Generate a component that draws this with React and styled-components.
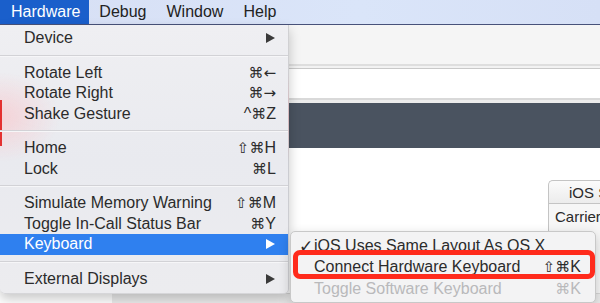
import React from "react";
import styled, { createGlobalStyle } from "styled-components";

const Global = createGlobalStyle`
  html, body { margin: 0; padding: 0; }
  body {
    width: 600px;
    height: 303px;
    overflow: hidden;
    font-family: "Liberation Sans", "DejaVu Sans", Arial, sans-serif;
    -webkit-font-smoothing: antialiased;
  }
  #root { width: 600px; height: 303px; }
`;

const Screen = styled.div`
  position: relative;
  width: 600px;
  height: 303px;
  overflow: hidden;
  background: #fff;
  display: flex;
  flex-direction: column;
`;

const MenuBar = styled.div`
  height: 24px;
  flex: none;
  display: flex;
  align-items: stretch;
  border-bottom: 1px solid #48527a;
  background: linear-gradient(90deg, #d7dff4 0%, #dae5f9 60%, #d6e0f6 100%);
`;

const BarItem = styled.div`
  display: flex;
  align-items: center;
  padding: ${(p) => (p.$first ? "0 9px 0 11px" : "0 10px")};
  font-size: 16px;
  color: ${(p) => (p.$active ? "#fff" : "#222")};
  background: ${(p) => (p.$active ? "#1a5fcb" : "transparent")};
`;

const Toolbar = styled.div`
  height: 39px;
  flex: none;
  background: #f5f5f5;
  border-bottom: 2px solid #dedede;
`;

const ThinStrip = styled.div`
  height: 2px;
  flex: none;
  background: #f2f2f2;
  border-bottom: 1px solid #c9c9c9;
`;

const WhiteBand = styled.div`
  height: 29px;
  flex: none;
  background: #fff;
  border-bottom: 2px solid #d9d9d9;
`;

const GreyBand = styled.div`
  height: 3px;
  flex: none;
  background: #ececec;
`;

const DarkBar = styled.div`
  height: 45px;
  flex: none;
  background: #4a5360;
`;

const Content = styled.div`
  flex: 1;
  display: flex;
  flex-direction: column;
  background: #fff;
`;

const ContentUpper = styled.div`
  flex: 1;
  display: flex;
  justify-content: flex-end;
  padding-top: 32px;
`;

const SideColumn = styled.div`
  width: 52px;
  display: flex;
  flex-direction: column;
  overflow: hidden;
  white-space: nowrap;
`;

const Tab = styled.div`
  height: 22px;
  flex: none;
  border: 1px solid #c4c4c4;
  border-right: none;
  border-radius: 5px 0 0 0;
  background: linear-gradient(#fbfbfb, #ececec);
  font-size: 15px;
  color: #2a2a2a;
  padding-left: 20px;
  display: flex;
  align-items: center;
  overflow: hidden;
`;

const Panel = styled.div`
  flex: 1;
  border-left: 1px solid #c4c4c4;
  background: #f6f6f6;
  font-size: 15px;
  color: #2a2a2a;
  padding: 4px 0 0 6px;
  overflow: hidden;
`;

const BottomBar = styled.div`
  height: 9px;
  flex: none;
  margin-left: 112px;
  background: #ebebeb;
  border-top: 1px solid #d6d6d6;
`;

const Dropdown = styled.div`
  position: absolute;
  left: 0;
  top: 25px;
  width: 289px;
  box-sizing: border-box;
  padding: 3px 0 4px;
  border-right: 1px solid rgba(0, 0, 0, 0.12);
  border-bottom: 1px solid rgba(0, 0, 0, 0.1);
  border-radius: 0 0 5px 5px;
  box-shadow: 0 5px 12px rgba(0, 0, 0, 0.22);
  background:
    linear-gradient(90deg, rgba(226, 30, 30, 0.9) 0 2px, transparent 2px) 0 75px / 100% 46px no-repeat,
    radial-gradient(ellipse 60px 45px at 0 92px, rgba(255, 185, 190, 0.5), rgba(255, 185, 190, 0) 100%),
    linear-gradient(180deg, #efeff2 0%, #e9eaef 50%, #ececef 100%);
`;

const Submenu = styled.div`
  position: absolute;
  left: 290px;
  top: 231px;
  width: 306px;
  height: 72px;
  box-sizing: border-box;
  padding: 3px 0;
  border: 1px solid #c8c8c8;
  border-radius: 5px;
  box-shadow: 0 4px 12px rgba(0, 0, 0, 0.2);
  background: #f3f3f4;
`;

const Item = styled.div`
  height: ${(p) => (p.$tall ? "21.5px" : "20.5px")};
  display: flex;
  align-items: center;
  justify-content: space-between;
  padding: ${(p) => (p.$sub ? "0 14px 0 8px" : "0 12px 0 24px")};
  font-size: 16px;
  white-space: nowrap;
  color: ${(p) => (p.$active ? "#fff" : p.$disabled ? "#b9b9bb" : "#2b2b2b")};
  background: ${(p) => (p.$active ? "#2f80ef" : "transparent")};
`;

const Label = styled.span`
  display: flex;
  align-items: center;
`;

const Check = styled.span`
  width: 15px;
  flex: none;
  font-family: "DejaVu Sans", sans-serif;
  font-size: 17px;
  font-weight: bold;
`;

const Shortcut = styled.span`
  display: flex;
  align-items: center;
`;

const Mod = styled.span`
  font-family: "DejaVu Sans", sans-serif;
  font-size: 15px;
`;

const Separator = styled.div`
  height: 14px;
  display: flex;
  flex-direction: column;
  justify-content: center;
  &::before {
    content: "";
    height: 1px;
    background: #d2d2d6;
  }
  &::after {
    content: "";
    height: 1px;
    background: #f6f6f8;
  }
`;

const Highlight = styled.div`
  position: absolute;
  left: 293px;
  top: 250px;
  width: 302px;
  height: 29px;
  box-sizing: border-box;
  border: 5px solid #ff2b1c;
  border-radius: 7px;
`;

const Arrow = () => (
  <svg width="9" height="10" viewBox="0 0 9 10">
    <path d="M0 0 L9 5 L0 10 Z" fill="currentColor" />
  </svg>
);

const ArrowWrap = styled.span`
  display: flex;
  padding-right: 1px;
  color: ${(p) => (p.$active ? "#fff" : "#3a3a3a")};
`;

const MODS = "⌘⇧←→";

const Keys = ({ value }) => (
  <Shortcut>
    {Array.from(value || "").map((c, i) =>
      MODS.includes(c) ? <Mod key={i}>{c}</Mod> : <span key={i}>{c}</span>
    )}
  </Shortcut>
);

const mainMenu = [
  { label: "Device", arrow: true },
  "sep",
  { label: "Rotate Left", key: "⌘←" },
  { label: "Rotate Right", key: "⌘→" },
  { label: "Shake Gesture", key: "^⌘Z" },
  "sep",
  { label: "Home", key: "⇧⌘H" },
  { label: "Lock", key: "⌘L" },
  "sep",
  { label: "Simulate Memory Warning", key: "⇧⌘M" },
  { label: "Toggle In-Call Status Bar", key: "⌘Y" },
  { label: "Keyboard", arrow: true, active: true },
  "sep",
  { label: "External Displays", arrow: true },
];

const subMenu = [
  { label: "iOS Uses Same Layout As OS X", checked: true },
  { label: "Connect Hardware Keyboard", key: "⇧⌘K" },
  { label: "Toggle Software Keyboard", key: "⌘K", disabled: true },
];

export default function App() {
  return (
    <Screen>
      <Global />
      <MenuBar>
        <BarItem $active $first>Hardware</BarItem>
        <BarItem>Debug</BarItem>
        <BarItem>Window</BarItem>
        <BarItem>Help</BarItem>
      </MenuBar>
      <Toolbar />
      <ThinStrip />
      <WhiteBand />
      <GreyBand />
      <DarkBar />
      <Content>
        <ContentUpper>
          <SideColumn>
            <Tab>iOS S</Tab>
            <Panel>Carrier</Panel>
          </SideColumn>
        </ContentUpper>
        <BottomBar />
      </Content>

      <Dropdown>
        {mainMenu.map((m, i) =>
          m === "sep" ? (
            <Separator key={i} />
          ) : (
            <Item key={i} $active={m.active}>
              <Label>{m.label}</Label>
              {m.arrow ? (
                <ArrowWrap $active={m.active}>
                  <Arrow />
                </ArrowWrap>
              ) : (
                <Keys value={m.key} />
              )}
            </Item>
          )
        )}
      </Dropdown>

      <Submenu>
        {subMenu.map((m, i) => (
          <Item key={i} $sub $tall $disabled={m.disabled}>
            <Label>
              <Check>{m.checked ? "✓" : ""}</Check>
              {m.label}
            </Label>
            <Keys value={m.key} />
          </Item>
        ))}
      </Submenu>
      <Highlight />
    </Screen>
  );
}
